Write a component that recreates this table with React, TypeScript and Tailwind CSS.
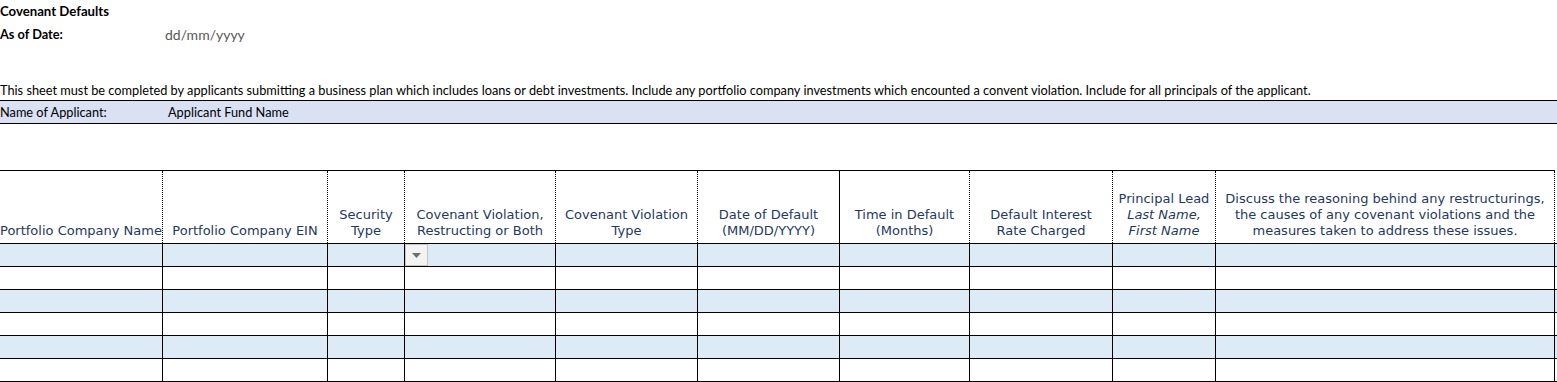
const calibri = "font-['Lato','Liberation_Sans',sans-serif]";
const verdana = "font-['DejaVu_Sans','Verdana',sans-serif]";

const cols = [
  "w-[162px]",
  "w-[165px]",
  "w-[77px]",
  "w-[151px]",
  "w-[142px]",
  "w-[142px]",
  "w-[130px]",
  "w-[143px]",
  "w-[103px]",
  "w-[340px]",
];

const headers: React.ReactNode[][] = [
  ["Portfolio Company Name"],
  ["Portfolio Company EIN"],
  ["Security", "Type"],
  ["Covenant Violation,", "Restructing or Both"],
  ["Covenant Violation", "Type"],
  ["Date of Default", "(MM/DD/YYYY)"],
  ["Time in Default", "(Months)"],
  ["Default Interest", "Rate Charged"],
  ["Principal Lead", <i key="l">Last Name,</i>, <i key="f">First Name</i>],
  [
    "Discuss the reasoning behind any restructurings,",
    "the causes of any covenant violations and the",
    "measures taken to address these issues.",
  ],
];

function headerBorder(i: number) {
  if (i === 0) return "";
  if (i === 6) return "border-l border-solid";
  if (i === 9) return "border-x border-dotted";
  return "border-l border-dotted";
}

export default function App() {
  return (
    <div className="w-[1557px] h-[382px] overflow-hidden bg-white text-black">
      <div className={`${calibri} text-[12.75px]`}>
        <div className="h-[23px] flex items-center font-bold text-[13.2px]">Covenant Defaults</div>
        <div className="h-[23px] flex items-center">
          <span className="w-[165px] font-bold">As of Date:</span>
          <span className="text-[#595959] text-[14px]">dd/mm/yyyy</span>
        </div>
        <div className="h-[33px]" />
        <div className="h-[21px] flex items-end">
          This sheet must be completed by applicants submitting a business plan which includes loans or debt
          investments. Include any portfolio company investments which encounted a convent violation. Include for all
          principals of the applicant.
        </div>
        <div className="h-[24px] flex items-center pt-[1px] bg-[#d9e1f2] border-y border-black">
          <span className="w-[168px]">Name of Applicant:</span>
          <span>Applicant Fund Name</span>
        </div>
        <div className="h-[46px]" />
      </div>

      <div className={`${verdana} text-[13px] leading-[16px]`}>
        {/* solid line above the header */}
        <div className="h-px w-[1555px] bg-black" />
        <div className="flex h-[73px] border-b border-black text-[#1f3864]">
          {headers.map((lines, i) => (
            <div
              key={i}
              className={`${cols[i]} shrink-0 border-black ${headerBorder(i)} flex flex-col justify-end items-center pb-[4px] text-center whitespace-nowrap`}
            >
              {lines.map((l, k) => (
                <div key={k}>{l}</div>
              ))}
            </div>
          ))}
        </div>

        {[0, 1, 2, 3, 4, 5].map((r) => (
          <div
            key={r}
            className={`flex h-[23px] border-b border-black ${r % 2 === 0 ? "bg-[#ddebf7]" : "bg-white"}`}
          >
            {cols.map((w, c) => (
              <div
                key={c}
                className={`${w} shrink-0 relative border-black ${c > 0 ? "border-l" : ""} ${c === 9 ? "border-r" : ""}`}
              >
                {r === 0 && c === 3 && (
                  <div className="absolute left-0 top-0 w-[23px] h-[22px] border border-[#c6c6c6] bg-[#f3f3f3] flex items-center justify-center">
                    <svg width="9" height="5" viewBox="0 0 9 5">
                      <path d="M0 0 H9 L4.5 5 Z" fill="#6d6d6d" />
                    </svg>
                  </div>
                )}
              </div>
            ))}
          </div>
        ))}
      </div>
    </div>
  );
}
